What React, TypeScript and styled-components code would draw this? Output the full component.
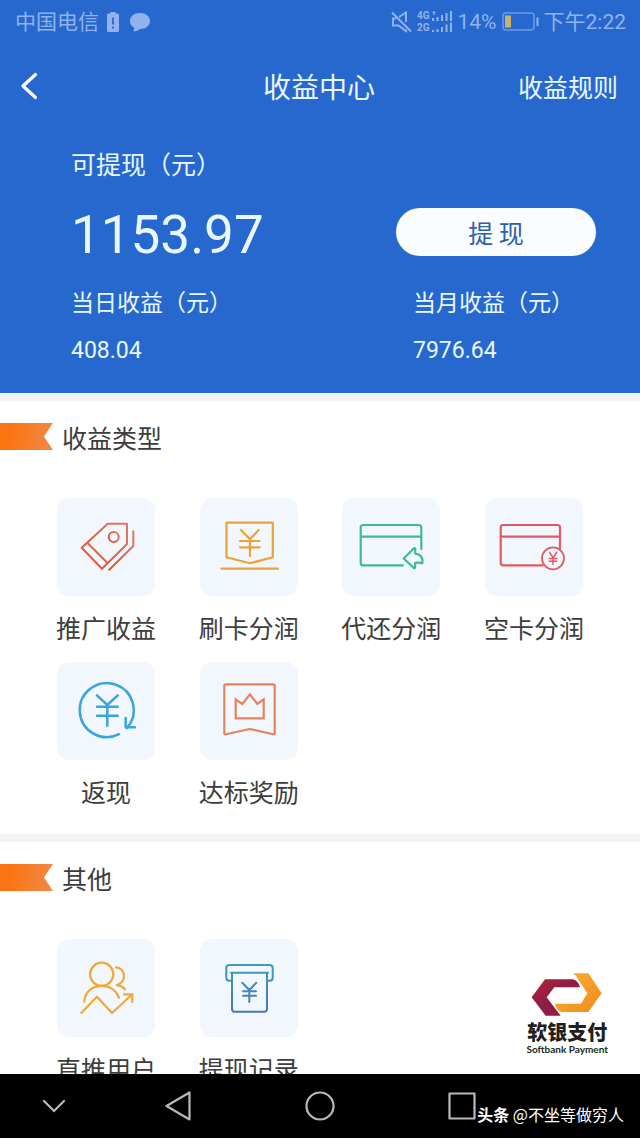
import React from "react";
import styled, { createGlobalStyle } from "styled-components";

const GlobalStyle = createGlobalStyle`
  *, *::before, *::after { box-sizing: border-box; }
  body {
    margin: 0;
    background: #fff;
    color: #3d3d3d;
    font-family: "Noto Sans CJK SC", sans-serif;
    font-size: 25px;
    line-height: 36px;
  }
  h1, h2, p, ul, dl, dd { margin: 0; padding: 0; font-weight: 400; }
  button { font: inherit; color: inherit; border: 0; padding: 0; background: none; cursor: pointer; }
  a { color: inherit; text-decoration: none; }
  svg { display: block; }
`;

const latin = `Roboto, "Noto Sans CJK SC", sans-serif`;

const Screen = styled.div`
  position: relative;
  display: flex;
  flex-direction: column;
  height: 100vh;
`;

const Content = styled.main`
  flex: 1;
  min-height: 0;
  overflow: hidden;
`;

const Hero = styled.header`
  background: #2768cf;
  color: #e9f8ff;
  padding-bottom: 24px;
`;

const StatusBar = styled.div`
  display: flex;
  justify-content: space-between;
  align-items: center;
  height: 44px;
  padding: 0 14px 0 15px;
  font-family: ${latin};
  font-size: 21px;
  color: #8fb3ea;
`;

const StatusGroup = styled.div<{ $gap: number }>`
  display: flex;
  align-items: center;
  gap: ${(p) => p.$gap}px;
`;

const Networks = styled.span`
  display: flex;
  flex-direction: column;
  font-size: 10px;
  font-weight: 700;
  line-height: 12px;
`;

const Signal = styled.span`
  display: flex;
  align-items: center;
  gap: 1px;
`;

const TitleBar = styled.div`
  display: grid;
  grid-template-columns: 1fr auto 1fr;
  align-items: center;
  height: 84px;
  padding: 0 22px 0 20px;
`;

const BackButton = styled.button`
  display: flex;
  justify-self: start;
`;

const Title = styled.h1`
  font-size: 28px;
`;

const RulesLink = styled.a`
  justify-self: end;
`;

const Balance = styled.div`
  display: grid;
  grid-template-columns: 1fr 200px;
  align-items: center;
  margin-top: 17px;
  padding: 0 44px 0 71px;
`;

const BalanceLabel = styled.p`
  grid-column: 1 / -1;
`;

const Amount = styled.p`
  margin: 24px 0 18px;
  font-family: ${latin};
  font-size: 53px;
  line-height: 60px;
`;

const WithdrawButton = styled.button`
  height: 48px;
  border-radius: 24px;
  background: #fafcfd;
  color: #2b5fae;
`;

const Stat = styled.dl<{ $indent?: boolean }>`
  padding-left: ${(p) => (p.$indent ? 17 : 0)}px;
  font-size: 23px;
  white-space: nowrap;
  dd {
    margin-top: 14px;
    font-family: ${latin};
  }
`;

const Section = styled.section`
  border-top: 8px solid #f3f3f4;
  padding: 22px 0 25px;
`;

const SectionHead = styled.div`
  display: flex;
  align-items: center;
  gap: 9px;
  height: 27px;
`;

const SectionTitle = styled.h2`
  font-size: 25px;
`;

const Ribbon = styled.span`
  width: 53px;
  height: 27px;
  background: linear-gradient(100deg, #fb7412 20%, #f08a48);
  clip-path: polygon(0 0, 100% 0, 83% 50%, 100% 100%, 0 100%);
`;

const TileGrid = styled.ul`
  display: grid;
  grid-template-columns: repeat(4, 98px);
  justify-content: space-between;
  row-gap: 17px;
  margin-top: 48px;
  padding: 0 57px;
  list-style: none;
`;

const Tile = styled.a`
  display: flex;
  flex-direction: column;
  align-items: center;
  gap: 13px;
  white-space: nowrap;
`;

const TileIcon = styled.span<{ $color: string }>`
  width: 98px;
  height: 98px;
  border-radius: 12px;
  background: #f2f7fd;
  color: ${(p) => p.$color};
`;

const NavBar = styled.nav`
  display: grid;
  grid-template-columns: 107fr 142fr 142fr 142fr 107fr;
  height: 64px;
  background: #000;
  color: #b9b9b9;
`;

const NavButton = styled.button`
  display: flex;
  align-items: center;
  justify-content: center;
`;

const Brand = styled.div`
  position: absolute;
  right: 32px;
  bottom: 84px;
  display: flex;
  flex-direction: column;
  align-items: center;
  color: #231f20;
`;

const BrandName = styled.span`
  margin-top: 2px;
  font-size: 20px;
  font-weight: 900;
  line-height: 24px;
`;

const BrandSub = styled.span`
  font-family: Lato, sans-serif;
  font-size: 10px;
  font-weight: 700;
  line-height: 10px;
`;

const Credit = styled.p`
  position: absolute;
  right: 16px;
  bottom: 12px;
  font-size: 16px;
  line-height: 24px;
  color: #fff;
  white-space: pre;
`;

const Glyph = ({ children, width = 2 }: { children: React.ReactNode; width?: number }) => (
  <svg
    width="98"
    height="98"
    viewBox="0 0 98 98"
    fill="none"
    stroke="currentColor"
    strokeWidth={width}
    strokeLinecap="round"
    strokeLinejoin="round"
    aria-hidden="true"
  >
    {children}
  </svg>
);

const TagIcon = () => (
  <Glyph>
    <defs>
      <linearGradient id="tag" x1="0" y1="1" x2="1" y2="0">
        <stop offset="0" stopColor="#e2502f" />
        <stop offset="1" stopColor="#dd7a68" />
      </linearGradient>
    </defs>
    <g stroke="url(#tag)">
      <path d="M24.7 49.7 50.7 25.7H70V46L45 70.7Z" />
      <path d="M30.3 44.7 50.5 65" />
      <circle cx="56.7" cy="39" r="5" />
      <path d="M76.3 33.3V48L52.3 71.7" />
    </g>
  </Glyph>
);

const BannerYenIcon = () => (
  <Glyph width={2.2}>
    <path d="M26.5 24.7H72.8V59.3L50 65.3 26.5 59.3Z" />
    <path d="M21.5 70.7H78" />
    <path d="M41 32 50 41.3 58.7 32M40 43H59.6M40 49.3H59.6M50 41.3V58" />
  </Glyph>
);

const CardReturnIcon = () => (
  <Glyph width={2.2}>
    <path d="M61 67.3H21.2a2.5 2.5 0 0 1-2.5-2.5V29.5A2.5 2.5 0 0 1 21.2 27H76.8a2.5 2.5 0 0 1 2.5 2.5V51M18.7 38.7H79.3" />
    <path d="M61.7 60.5 72 50.3Q73.2 49.8 73.2 51V55.6C78.2 56 81.6 59.8 80.2 65.2 78.6 64.4 76.3 64.4 73.2 64.8V69Q73 71 71.6 69.8Z" />
  </Glyph>
);

const CardYenIcon = () => (
  <Glyph width={2.2}>
    <path d="M57.7 67.3H18.2a2.5 2.5 0 0 1-2.5-2.5V29.5A2.5 2.5 0 0 1 18.2 27H72.5a2.5 2.5 0 0 1 2.5 2.5V51M15.7 38.7H75" />
    <circle cx="68" cy="60.3" r="11" strokeWidth="1.8" />
    <path d="M64.5 54.3 68 59.5 71.8 54.3M64.3 60.5H71.8M64.3 63.3H71.8M68 59.5V66.3" strokeWidth="1.5" />
  </Glyph>
);

const RefundIcon = () => (
  <Glyph width={2.5}>
    <path d="M62 72.2A27 27 0 1 1 70 66" />
    <path d="M68.7 56V65.2H78" />
    <path d="M40 33.3 50.3 43 60.7 33.3M40 44.7H60.7M40 53.7H60.7M50.3 43V63.7" />
  </Glyph>
);

const CrownIcon = () => (
  <Glyph width={2.2}>
    <path d="M26 22.3H73Q74.7 22.3 74.7 24V71.2Q74.7 72.6 73 72.2L49.7 67 26 72.2Q24.3 72.6 24.3 71.2V24Q24.3 22.3 26 22.3Z" />
    <path d="M35.7 37.3 42.3 42 50 32.3 57.3 42 63.7 37.3V56.3H35.7Z" strokeLinejoin="miter" />
  </Glyph>
);

const UsersIcon = () => (
  <Glyph width={2.2}>
    <circle cx="44.7" cy="35.3" r="11.6" />
    <path d="M59 28.3C64.3 28.8 67 32.8 67 37.2 67 41.8 64 44.6 59.7 46.2 63 46.6 66 48 68 50.3" />
    <path d="M27.3 62.7C28 53 35 46.9 44.7 46.9 53 46.9 59.5 51.6 62 59" />
    <path d="M24.3 74 40 57.7 55 74 75.3 55.3M67 55.3H75.3V63" />
  </Glyph>
);

const ReceiptIcon = () => (
  <Glyph>
    <defs>
      <linearGradient id="receipt" gradientUnits="userSpaceOnUse" x1="0" y1="25" x2="0" y2="73">
        <stop offset="0" stopColor="#3c9fb8" />
        <stop offset="1" stopColor="#4674bd" />
      </linearGradient>
    </defs>
    <g stroke="url(#receipt)">
      <path d="M32 41.7H29.3A3 3 0 0 1 26.3 38.7V29a3 3 0 0 1 3-3H69.7a3 3 0 0 1 3 3V38.7a3 3 0 0 1-3 3H67" />
      <path d="M31 33.7H68M32 33.7V70a2.7 2.7 0 0 0 2.7 2.7H64.3A2.7 2.7 0 0 0 67 70V33.7" />
      <path d="M42.3 43.7 49.3 51 56.3 43.7M43 52.3H56M43 56.7H56M49.3 51V63" />
    </g>
  </Glyph>
);

interface TileData {
  label: string;
  color: string;
  icon: React.ReactNode;
}

const earningTypes: TileData[] = [
  { label: "推广收益", color: "#e0563a", icon: <TagIcon /> },
  { label: "刷卡分润", color: "#eba238", icon: <BannerYenIcon /> },
  { label: "代还分润", color: "#3dba98", icon: <CardReturnIcon /> },
  { label: "空卡分润", color: "#e35a62", icon: <CardYenIcon /> },
  { label: "返现", color: "#3aa5dc", icon: <RefundIcon /> },
  { label: "达标奖励", color: "#e5835f", icon: <CrownIcon /> },
];

const others: TileData[] = [
  { label: "直推用户", color: "#eca93c", icon: <UsersIcon /> },
  { label: "提现记录", color: "#3f88bb", icon: <ReceiptIcon /> },
];

const TileSection = ({ title, tiles }: { title: string; tiles: TileData[] }) => (
  <Section>
    <SectionHead>
      <Ribbon />
      <SectionTitle>{title}</SectionTitle>
    </SectionHead>
    <TileGrid>
      {tiles.map((t) => (
        <li key={t.label}>
          <Tile href="#">
            <TileIcon $color={t.color}>{t.icon}</TileIcon>
            <span>{t.label}</span>
          </Tile>
        </li>
      ))}
    </TileGrid>
  </Section>
);

export default function App() {
  return (
    <Screen lang="zh-CN">
      <GlobalStyle />
      <Content>
        <Hero>
          <StatusBar>
            <StatusGroup $gap={8}>
              <span>中国电信</span>
              <svg width="12" height="20" viewBox="0 0 12 20" aria-hidden="true">
                <path d="M3.5 0h5v1.6H10.6Q12 1.6 12 3v15.4Q12 20 10.4 20H1.6Q0 20 0 18.4V3Q0 1.6 1.4 1.6H3.5Z" fill="currentColor" />
                <path d="M6 5.5V12.5M6 14.5V16.5" stroke="#2768cf" strokeWidth="1.8" />
              </svg>
              <svg width="24" height="20" viewBox="0 0 24 20" aria-hidden="true">
                <path d="M13 1C19 1 23 4.5 23 9s-4 8-10 8C11 19 8.5 19.6 6 19.300 7 18.300 7.500 17 7 15.600 4.300 14 3 11.600 3 9 3 4.500 7 1 13 1Z" fill="currentColor" />
              </svg>
            </StatusGroup>
            <StatusGroup $gap={5}>
              <svg width="21" height="22" viewBox="0 0 21 22" fill="none" stroke="currentColor" strokeWidth="2" aria-hidden="true">
                <path d="M1 1.500 20 20.500" />
                <path d="M8 6 15 1.500V11M15 18.500V20L7.500 14.500H2V7.500H5" />
              </svg>
              <Signal>
                <Networks>
                  <span>4G</span>
                  <span>2G</span>
                </Networks>
                <svg width="22" height="22" viewBox="0 0 22 22" fill="currentColor" aria-hidden="true">
                  <path d="M1 7h2v3H1zM5.500 6h2v4h-2zM10 4h2v6h-2zM14.500 2h2v8h-2zM19 0h2v10h-2zM1 19h2v2H1zM5.500 18h2v3h-2zM10 16h2v5h-2zM14.500 13.500h2V21h-2zM19 11.500h2V21h-2z" />
                  <path d="M1 2 3 0 5 2H3.600V4H2.400V2Z" />
                </svg>
              </Signal>
              <span>14%</span>
              <svg width="37" height="20" viewBox="0 0 37 20" aria-hidden="true">
                <rect x="1" y="1" width="31" height="17" rx="3" fill="none" stroke="#6e9be2" strokeWidth="1.500" />
                <rect x="3" y="3.500" width="6" height="12" fill="#c9b36c" />
                <path d="M35.500 5.500V14" stroke="currentColor" strokeWidth="2" />
              </svg>
              <span>下午2:22</span>
            </StatusGroup>
          </StatusBar>
          <TitleBar>
            <BackButton type="button" aria-label="返回">
              <svg width="18" height="28" viewBox="0 0 18 28" fill="none" stroke="#fff" strokeWidth="3.200" strokeLinecap="round" strokeLinejoin="round">
                <path d="M15.500 2.500 3 14 15.500 25.500" />
              </svg>
            </BackButton>
            <Title>收益中心</Title>
            <RulesLink href="#">收益规则</RulesLink>
          </TitleBar>
          <Balance>
            <BalanceLabel>可提现（元）</BalanceLabel>
            <Amount>1153.97</Amount>
            <WithdrawButton type="button">提 现</WithdrawButton>
            <Stat>
              <dt>当日收益（元）</dt>
              <dd>408.04</dd>
            </Stat>
            <Stat $indent>
              <dt>当月收益（元）</dt>
              <dd>7976.64</dd>
            </Stat>
          </Balance>
        </Hero>
        <TileSection title="收益类型" tiles={earningTypes} />
        <TileSection title="其他" tiles={others} />
      </Content>
      <NavBar>
        <NavButton type="button" aria-label="收起">
          <svg width="24" height="14" viewBox="0 0 24 14" fill="none" stroke="currentColor" strokeWidth="2.200" strokeLinecap="round">
            <path d="M2 2 12 12 22 2" />
          </svg>
        </NavButton>
        <NavButton type="button" aria-label="后退">
          <svg width="26" height="30" viewBox="0 0 26 30" fill="none" stroke="currentColor" strokeWidth="2.200" strokeLinejoin="round">
            <path d="M1.500 15 24.500 1.500V28.500Z" />
          </svg>
        </NavButton>
        <NavButton type="button" aria-label="主页">
          <svg width="30" height="30" viewBox="0 0 30 30" fill="none" stroke="currentColor" strokeWidth="2.200">
            <circle cx="15" cy="15" r="13.500" />
          </svg>
        </NavButton>
        <NavButton type="button" aria-label="最近任务">
          <svg width="28" height="28" viewBox="0 0 28 28" fill="none" stroke="currentColor" strokeWidth="2.200" strokeLinejoin="round">
            <rect x="1.500" y="1.500" width="25" height="25" />
          </svg>
        </NavButton>
      </NavBar>
      <Brand>
        <svg width="72" height="46" viewBox="96 66 216 138" aria-hidden="true">
          <defs>
            <linearGradient id="maroon" x1="0" y1="0" x2="1" y2="1">
              <stop offset="0" stopColor="#b3243c" />
              <stop offset="0.500" stopColor="#8c1d45" />
              <stop offset="1" stopColor="#a3203c" />
            </linearGradient>
            <linearGradient id="gold" x1="0" y1="0" x2="1" y2="1">
              <stop offset="0" stopColor="#f9b233" />
              <stop offset="1" stopColor="#f08a1d" />
            </linearGradient>
          </defs>
          <path d="M98 142 138 88H222Q238 92 243 112H166L143 142 185 197H140Z" fill="url(#maroon)" />
          <path d="M222 70H268L308 130 268 186H186Q172 180 168 161H246L265 130 240 92Q234 78 222 70Z" fill="url(#gold)" />
        </svg>
        <BrandName>软银支付</BrandName>
        <BrandSub>Softbank Payment</BrandSub>
      </Brand>
      <Credit>
        <b>头条</b> @不坐等做穷人
      </Credit>
    </Screen>
  );
}
